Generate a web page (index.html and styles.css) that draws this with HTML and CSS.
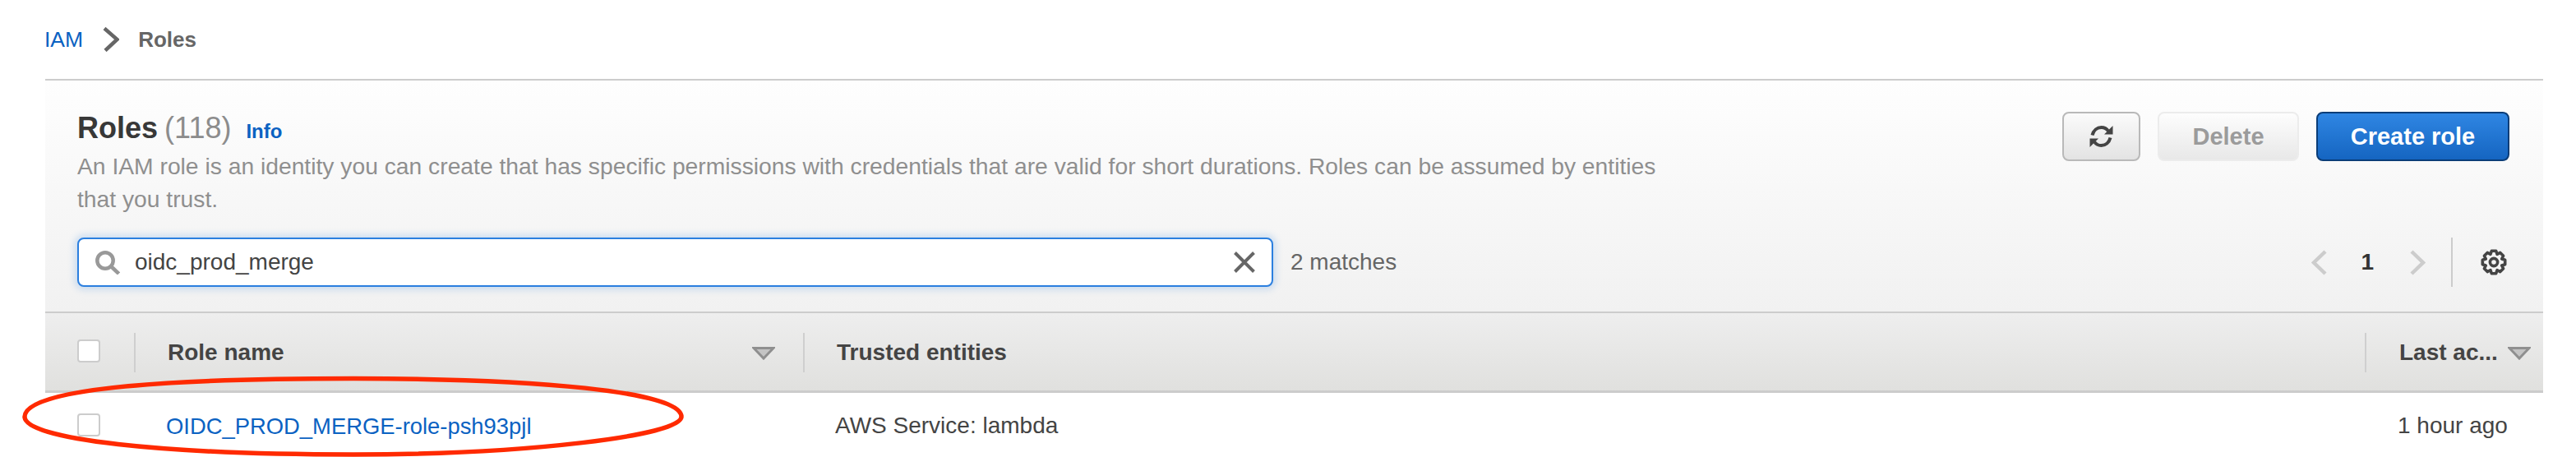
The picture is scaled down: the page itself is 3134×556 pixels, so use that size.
FILE: index.html
```html
<!DOCTYPE html>
<html lang="en">
<head>
<meta charset="utf-8">
<title>Roles | IAM</title>
<link rel="stylesheet" href="styles.css">
</head>
<body>
<nav class="crumbs">
  <a class="link" href="#">IAM</a>
  <svg class="crumb-sep" viewBox="0 0 20 30"><path d="M2 1.5 L17.5 15 L3 28.5"/></svg>
  <span class="crumb-here">Roles</span>
</nav>

<main class="panel">
  <section class="panel-head">
    <div class="head-row">
      <div class="head-text">
        <h1 class="title"><span class="title-main">Roles</span><span class="count">(118)</span><a class="info" href="#">Info</a></h1>
        <p class="desc">An IAM role is an identity you can create that has specific permissions with credentials that are valid for short durations. Roles can be assumed by entities that you trust.</p>
      </div>
      <div class="actions">
        <button class="btn btn-icon" type="button" aria-label="Refresh">
          <svg class="refresh" viewBox="0 0 29 28">
            <path class="refresh-arc" d="M3.5 12.5 C5 6.5 9.5 3 14.5 3 C18 3 21 4.5 23 7.5"/>
            <path class="refresh-arc" d="M25.5 15.5 C24 21.5 19.5 25 14.5 25 C11 25 8 23.5 6 20.5"/>
            <path class="refresh-head" d="M28.5 1 V11.5 H18 Z"/>
            <path class="refresh-head" d="M0.5 27 V16.5 H11 Z"/>
          </svg>
        </button>
        <button class="btn btn-off" type="button">Delete</button>
        <button class="btn btn-primary" type="button">Create role</button>
      </div>
    </div>
    <div class="toolbar">
      <div class="search">
        <svg class="search-icon" viewBox="0 0 30 29"><circle cx="12" cy="12" r="9.7"/><path d="M19 19 L28.5 28"/></svg>
        <span class="search-text">oidc_prod_merge</span>
        <svg class="clear" viewBox="0 0 26 26"><path d="M1.5 1.5 L24.5 24.5 M24.5 1.5 L1.5 24.5"/></svg>
      </div>
      <span class="matches">2 matches</span>
      <div class="pager">
        <svg class="page-arrow" viewBox="0 0 19 31"><path d="M17 2 L3 15.5 L17 29"/></svg>
        <span class="page-num">1</span>
        <svg class="page-arrow" viewBox="0 0 19 31"><path d="M2 2 L16 15.5 L2 29"/></svg>
        <span class="pager-rule"></span>
        <svg class="gear" viewBox="0 0 32 32">
          <path d="M13.3 2.3 L18.7 2.3 L20 6.3 L23.8 4.4 L27.6 8.2 L25.7 12 L29.7 13.3 L29.7 18.7 L25.7 20 L27.6 23.8 L23.8 27.6 L20 25.7 L18.7 29.7 L13.3 29.7 L12 25.7 L8.2 27.6 L4.4 23.8 L6.3 20 L2.3 18.7 L2.3 13.3 L6.3 12 L4.4 8.2 L8.2 4.4 L12 6.3 Z"/>
          <circle cx="16" cy="16" r="4.6"/>
        </svg>
      </div>
    </div>
  </section>

  <section class="table">
    <div class="thead">
      <div class="th th-check"><span class="check"></span></div>
      <div class="th th-name">
        <span>Role name</span>
        <svg class="caret" viewBox="0 0 28 16"><path d="M2 1.5 H26 L14 14 Z"/></svg>
      </div>
      <div class="th th-ruled">Trusted entities</div>
      <div class="th th-ruled th-last">
        <span>Last ac...</span>
        <svg class="caret" viewBox="0 0 28 16"><path d="M2 1.5 H26 L14 14 Z"/></svg>
      </div>
    </div>
    <div class="trow">
      <div class="td td-check"><span class="check"></span></div>
      <div class="td td-name"><a class="link" href="#">OIDC_PROD_MERGE-role-psh93pjl</a></div>
      <div class="td td-trust">AWS Service: lambda</div>
      <div class="td td-last">1 hour ago</div>
    </div>
  </section>
</main>

<svg class="annotation" viewBox="0 0 3134 556" aria-hidden="true">
  <path d="M30 507 C30 474 190 460.5 430 460.5 C650 460.5 829 476 829 507 C829 530 640 553 430 553 C200 553 30 535 30 507 Z"/>
</svg>
</body>
</html>
```

FILE: styles.css
```css
* { box-sizing: border-box; }

html, body {
  margin: 0;
  height: 556px;
  overflow: hidden;
  background: #fff;
}

body {
  position: relative;
  font-family: "Liberation Sans", Arial, sans-serif;
  font-size: 28px;
  line-height: 40px;
  color: #444;
}

.link { color: #0b62c2; text-decoration: none; }

/* breadcrumb */
.crumbs {
  height: 96px;
  padding-left: 54px;
  display: flex;
  align-items: center;
  font-size: 26.5px;
}
.crumb-sep {
  width: 20px;
  height: 30px;
  margin: 0 23px 0 24px;
  fill: none;
  stroke: #666;
  stroke-width: 4.5;
}
.crumb-here { font-weight: 700; color: #666; font-size: 26px; }

/* panel */
.panel {
  width: 3039px;
  margin-left: 55px;
  border-top: 2px solid #ccc;
}
.panel-head {
  height: 283px;
  padding: 38px 44px 0 39px;
  background: linear-gradient(#fefefe, #f1f1f1);
  border-bottom: 2px solid #ccc;
}
.head-row {
  display: flex;
  justify-content: space-between;
  align-items: flex-start;
  height: 155px;
}
.head-text { width: 1965px; }
.title {
  margin: 0 0 2px;
  font-size: 36px;
  line-height: 40px;
  font-weight: 400;
  display: flex;
  align-items: baseline;
}
.title-main { font-weight: 700; color: #383838; }
.count { margin-left: 8px; color: #8c8c8c; }
.info {
  margin-left: 18px;
  font-size: 24px;
  font-weight: 700;
  color: #0b62c2;
  text-decoration: none;
}
.desc { margin: 0; font-size: 28.25px; color: #8f8f8f; }

.actions {
  display: flex;
  gap: 21px;
  margin-right: -3px;
}
.btn {
  height: 60px;
  border-radius: 8px;
  border: 2px solid #b9b9b9;
  padding: 0;
  font: 700 29px/1 "Liberation Sans", Arial, sans-serif;
  display: flex;
  align-items: center;
  justify-content: center;
}
.btn-icon {
  width: 95px;
  background: linear-gradient(#fbfbfb, #e3e3e3);
}
.btn-off {
  width: 172px;
  color: #9b9b9b;
  border-color: #ececec;
  background: linear-gradient(#fdfdfd, #e8e8e8);
}
.btn-primary {
  width: 235px;
  color: #fff;
  border-color: #0a3d78;
  background: linear-gradient(#2f86e3, #1565c1);
}
.refresh { width: 29px; height: 28px; }
.refresh-arc { fill: none; stroke: #444; stroke-width: 4; }
.refresh-head { fill: #444; }

/* toolbar */
.toolbar {
  display: flex;
  align-items: center;
  height: 60px;
  margin-top: -2px;
}
.search {
  width: 1455px;
  height: 60px;
  display: flex;
  align-items: center;
  padding: 0 20px 0 20px;
  background: #fff;
  border: 2px solid #2b7fdf;
  border-radius: 8px;
  box-shadow: 0 0 8px 3px rgba(43, 127, 223, .22);
}
.search-icon {
  width: 30px;
  height: 29px;
  flex: none;
  fill: none;
  stroke: #999;
  stroke-width: 4.5;
}
.search-text { margin-left: 18px; flex: 1; color: #444; }
.clear {
  width: 26px;
  height: 26px;
  flex: none;
  fill: none;
  stroke: #666;
  stroke-width: 4;
}
.matches { margin-left: 21px; color: #666; }
.pager { margin-left: auto; display: flex; align-items: center; }
.page-arrow {
  width: 19px;
  height: 31px;
  fill: none;
  stroke: #ccc;
  stroke-width: 4.5;
}
.page-num { margin: 0 44px 0 41px; font-weight: 700; color: #333; }
.pager-rule {
  width: 2px;
  height: 60px;
  margin: 0 34px 0 31px;
  background: #ccc;
}
.gear {
  width: 32px;
  height: 32px;
  fill: none;
  stroke: #444;
  stroke-width: 3.6;
  stroke-linejoin: round;
}

/* table */
.thead {
  display: grid;
  grid-template-columns: 108px 814px 1900px 217px;
  height: 97px;
  padding-top: 24px;
  background: linear-gradient(#eeeeee, #e0e0de);
  border-bottom: 3px solid #ccc;
}
.th {
  height: 48px;
  padding-top: 4px;
  font-weight: 700;
  color: #444;
  white-space: nowrap;
}
.th-check { padding: 8px 0 0 39px; }
.th-name,
.th-ruled {
  border-left: 2px solid #cfcfcf;
  padding-left: 39px;
}
.th-name {
  display: flex;
  justify-content: space-between;
  align-items: flex-start;
  padding-right: 34px;
}
.th-last {
  display: flex;
  gap: 12px;
  align-items: flex-start;
  padding-left: 40px;
}
.caret {
  width: 28px;
  height: 16px;
  margin-top: 13px;
  flex: none;
  fill: #c4c4c4;
  stroke: #8f8f8f;
  stroke-width: 3;
}
.check {
  display: block;
  width: 28px;
  height: 28px;
  background: #fff;
  border: 2px solid #ccc;
  border-radius: 4px;
}
.trow {
  display: grid;
  grid-template-columns: 108px 814px 1900px 217px;
  padding-top: 20px;
  white-space: nowrap;
}
.td-check { padding: 5px 0 0 39px; }
.td-name { padding-left: 39px; font-size: 27.4px; line-height: 41px; }
.td-trust { padding-left: 39px; }
.td-last { padding-left: 40px; color: #444; }

/* hand-drawn marker on top of the screenshot */
.annotation {
  position: absolute;
  left: 0;
  top: 0;
  width: 3134px;
  height: 556px;
  fill: none;
  stroke: #ff2a00;
  stroke-width: 5.5;
  pointer-events: none;
}
```
